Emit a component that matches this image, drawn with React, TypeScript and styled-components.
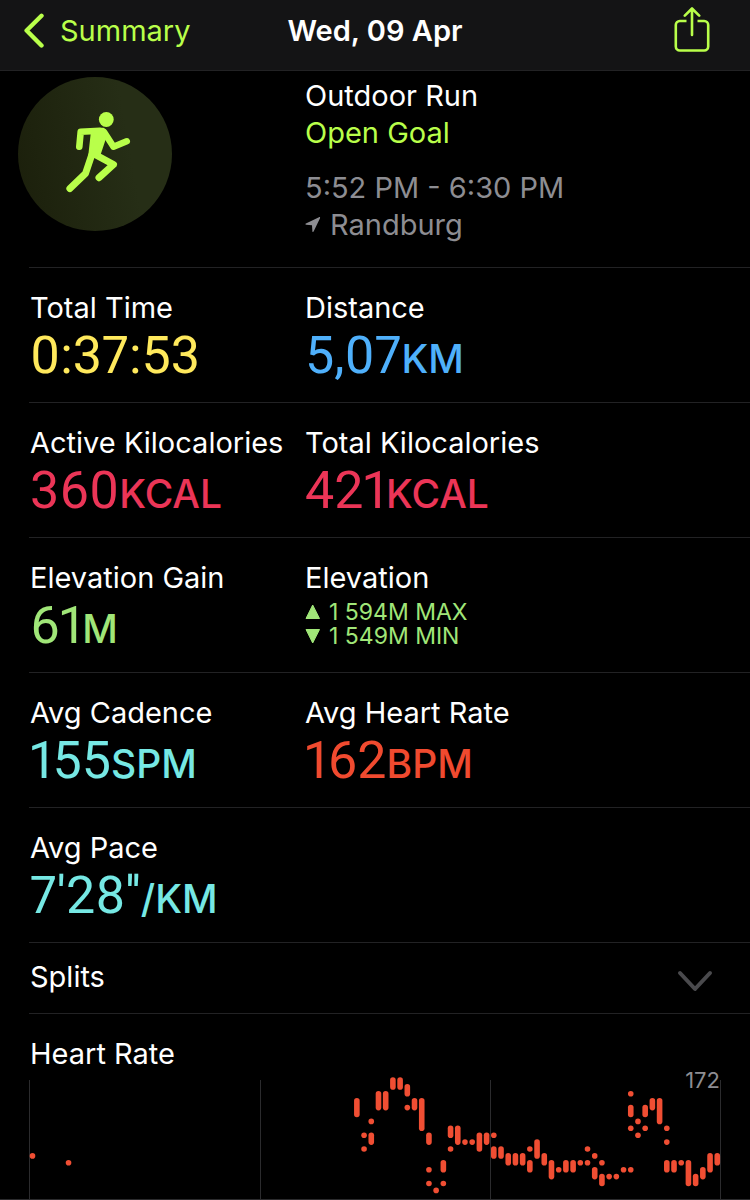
import React from "react";
import styled, { createGlobalStyle } from "styled-components";

const GlobalStyle = createGlobalStyle`
  *, *::before, *::after { box-sizing: border-box; }
  body {
    margin: 0;
    background: #000;
    color: #fff;
    font-family: Inter, Roboto, sans-serif;
    font-size: 29px;
    line-height: 36px;
  }
  h1, h2, p, dl, dt, dd { margin: 0; font: inherit; }
  button { font: inherit; color: inherit; background: none; border: 0; padding: 0; cursor: pointer; }
`;

const lime = "#b9ff4a";
const rule = "#222224";

const Page = styled.div`
  min-height: 100vh;
`;

const NavBar = styled.header`
  display: grid;
  grid-template-columns: 1fr auto 1fr;
  align-items: center;
  height: 71px;
  padding: 0 24px 8px;
  background: #141415;
  border-bottom: 1px solid ${rule};
`;

const BackLink = styled.a`
  display: flex;
  align-items: center;
  gap: 16px;
  color: ${lime};
  text-decoration: none;
`;

const Title = styled.h1`
  && { font-weight: 600; }
`;

const ShareButton = styled.button`
  && { color: ${lime}; }
  display: flex;
  justify-self: end;
  margin-right: 16px;
`;

const Summary = styled.div`
  display: grid;
  grid-template-columns: 275px 1fr;
  padding: 6px 0 24px 30px;
`;

const Badge = styled.div`
  display: flex;
  align-items: center;
  justify-content: center;
  width: 154px;
  height: 154px;
  margin-left: -12px;
  border-radius: 50%;
  background: linear-gradient(80deg, #1b1f0b, #262e16 70%);
`;

const Lines = styled.div`
  line-height: 37px;
`;

const Line = styled.p<{ $color?: string; $spaced?: boolean }>`
  && {
    display: flex;
    align-items: center;
    gap: 8px;
    color: ${(p) => p.$color ?? "#fff"};
    margin-top: ${(p) => (p.$spaced ? "18px" : "0")};
  }
`;

const Section = styled.section`
  margin-left: 29px;
  border-top: 1px solid ${rule};
`;

const StatRow = styled.dl`
  && {
    display: grid;
    grid-template-columns: 275px 1fr;
    margin-left: 29px;
    padding: 22px 0 20px 1px;
    border-top: 1px solid ${rule};
  }
`;

const Label = styled.dt`
  && {
    margin-bottom: 4px;
    white-space: nowrap;
  }
`;

const Value = styled.dd<{ $color: string }>`
  && {
    font-family: Roboto, Inter, sans-serif;
    font-size: 52px;
    line-height: 52px;
    font-variant-numeric: proportional-nums;
    color: ${(p) => p.$color};
    white-space: nowrap;
  }
`;

const Unit = styled.span`
  font-family: Inter, sans-serif;
  font-size: 39px;
  font-weight: 500;
  line-height: 1;
`;

const Range = styled.dd<{ $color: string }>`
  && {
    display: flex;
    align-items: center;
    gap: 8px;
    font-size: 23px;
    line-height: 24px;
    color: ${(p) => p.$color};
  }
`;

const SplitsToggle = styled.button`
  && {
    display: flex;
    align-items: center;
    justify-content: space-between;
    width: 100%;
    padding: 16px 37px 18px 1px;
    text-align: left;
  }
`;

const ChartTitle = styled.h2`
  && { padding: 22px 0 8px 1px; }
`;

const ChartArea = styled.div`
  position: relative;
  margin-right: 29px;
`;

const Peak = styled.span`
  position: absolute;
  top: -12px;
  right: 1px;
  font-size: 22px;
  line-height: 24px;
  color: #8d8d92;
`;

const ChartSvg = styled.svg`
  display: block;
  width: 100%;
  height: auto;
  overflow: visible;
`;

type Stat = { label: string; value: string; unit?: string; color: string; range?: [string, string] };

const rows: Stat[][] = [
  [
    { label: "Total Time", value: "0:37:53", color: "#ffe95c" },
    { label: "Distance", value: "5,07", unit: "KM", color: "#4fb0fb" },
  ],
  [
    { label: "Active Kilocalories", value: "360", unit: "KCAL", color: "#eb3557" },
    { label: "Total Kilocalories", value: "421", unit: "KCAL", color: "#eb3557" },
  ],
  [
    { label: "Elevation Gain", value: "61", unit: "M", color: "#a0e678" },
    { label: "Elevation", value: "", color: "#a0e678", range: ["1 594M MAX", "1 549M MIN"] },
  ],
  [
    { label: "Avg Cadence", value: "155", unit: "SPM", color: "#76e8e4" },
    { label: "Avg Heart Rate", value: "162", unit: "BPM", color: "#f04a2f" },
  ],
  [{ label: "Avg Pace", value: "7'28''", unit: "/KM", color: "#76e8e4" }],
];

// Heart-rate samples: [time slot, highest level, lowest level], level 0 at the top.
const samples: [number, number, number][] = [
  [0, 11, 11], [5, 12, 12], [45, 3, 5], [46, 8, 8], [46, 10, 10], [47, 6, 6], [47, 8, 9],
  [48, 2, 4], [49, 2, 4], [50, 0, 1], [51, 0, 1], [52, 1, 2], [52, 4, 4], [53, 3, 4],
  [54, 3, 7], [55, 8, 9], [55, 13, 13], [55, 15, 15], [56, 16, 16], [57, 12, 13], [57, 15, 15],
  [58, 7, 8], [58, 10, 10], [59, 7, 9], [60, 9, 9], [61, 9, 9], [62, 8, 10], [63, 8, 9],
  [64, 8, 8], [64, 10, 11], [65, 10, 11], [66, 11, 12], [67, 11, 12], [68, 11, 12],
  [69, 10, 10], [69, 12, 13], [70, 9, 11], [71, 11, 12], [72, 12, 14], [73, 13, 13],
  [74, 12, 13], [75, 12, 13], [76, 12, 12], [77, 10, 10], [77, 12, 12], [78, 11, 11],
  [78, 13, 14], [79, 12, 12], [79, 14, 15], [80, 14, 14], [81, 14, 14], [82, 13, 13],
  [83, 2, 2], [83, 4, 5], [83, 7, 7], [83, 13, 13], [84, 6, 6], [84, 8, 8], [85, 4, 5],
  [85, 7, 7], [86, 3, 4], [87, 3, 6], [88, 7, 7], [88, 9, 9], [88, 12, 13], [89, 12, 13],
  [90, 12, 12], [91, 12, 15], [92, 14, 15], [93, 13, 14], [94, 11, 13], [95, 11, 12],
];

const slotX = (slot: number) => 3.5 + slot * 7.208;
const levelY = (level: number) => level * 6.9;

function HeartRateChart() {
  return (
    <ChartSvg viewBox="0 0 692 120" role="img" aria-label="Heart rate over time">
      {[0, 231, 461, 691].map((x) => (
        <rect key={x} x={x} y={0} width={1} height={120} fill="#2b2b2d" />
      ))}
      <rect x={-29} y={119} width={750} height={1} fill="#2b2b2d" />
      {samples.map(([slot, high, low]) => (
        <rect
          key={`${slot}-${high}`}
          x={slotX(slot) - 2.8}
          y={levelY(high) - 2.8}
          width={5.6}
          height={levelY(low) - levelY(high) + 5.6}
          rx={2.8}
          fill="#f04e33"
        />
      ))}
    </ChartSvg>
  );
}

const BackIcon = () => (
  <svg width="20" height="36" viewBox="0 0 20 36" fill="none" stroke="currentColor" strokeWidth="4.4" strokeLinecap="round" strokeLinejoin="round" aria-hidden="true">
    <path d="M17.500 2.800 2.600 17.500 17.500 32.500" />
  </svg>
);

const ShareIcon = () => (
  <svg width="36" height="48" viewBox="0 0 36 48" fill="none" stroke="currentColor" strokeWidth="2.6" strokeLinecap="round" strokeLinejoin="round" aria-hidden="true">
    <path d="M12.500 14H5.800a4 4 0 0 0-4 4V39.500a4 4 0 0 0 4 4H30.200a4 4 0 0 0 4-4V18a4 4 0 0 0-4-4H23.500" strokeLinecap="butt" />
    <path d="M18 28V2M10.800 8.700 18 1.500 25.200 8.700" />
  </svg>
);

const RunnerIcon = () => (
  <svg width="72" height="86" viewBox="0 0 72 86" fill="none" stroke={lime} strokeWidth="6.6" strokeLinecap="round" strokeLinejoin="round" aria-hidden="true">
    <circle cx="47.300" cy="8.500" r="7.400" fill={lime} stroke="none" />
    <path d="M20.300 35.800 21.700 20.800 41 19.700" />
    <path d="M45 21 54.500 35.700 67.700 30.300" />
    <path d="M36 43.500 54.500 53.500 40 66.700" strokeWidth="7" />
    <path d="M32.700 44 26.500 62.500 10.900 77.500" strokeWidth="7" />
    <path d="M34 20 44 18.800 46.500 22.500 40 42 31 47Z" fill={lime} strokeWidth="4" />
  </svg>
);

const LocationIcon = () => (
  <svg width="17" height="17" viewBox="0 0 17 17" fill="currentColor" aria-hidden="true">
    <path d="M14 1.200.9 7.600c-.7.400-.6 1.100.2 1.200l5.900.4.400 6.200c.1.800.9.900 1.200.2L15 2.200c.3-.8-.2-1.300-1-1Z" />
  </svg>
);

const Triangle = ({ down }: { down?: boolean }) => (
  <svg width="16" height="16" viewBox="0 0 16 16" fill="currentColor" stroke="currentColor" strokeLinejoin="round" aria-hidden="true">
    <path d={down ? "M1 1.500H14.500L7.700 15Z" : "M1 14.500H14.500L7.700 1Z"} />
  </svg>
);

const ChevronDown = () => (
  <svg width="36" height="30" viewBox="0 0 36 30" fill="none" stroke="#4a4a4d" strokeWidth="4" strokeLinecap="round" strokeLinejoin="round" aria-hidden="true">
    <path d="M3 11 18 27 33 11" />
  </svg>
);

export default function App() {
  return (
    <Page>
      <GlobalStyle />
      <NavBar>
        <BackLink href="#summary">
          <BackIcon />
          Summary
        </BackLink>
        <Title>Wed, 09 Apr</Title>
        <ShareButton type="button" aria-label="Share">
          <ShareIcon />
        </ShareButton>
      </NavBar>
      <main>
        <Summary>
          <Badge>
            <RunnerIcon />
          </Badge>
          <Lines>
            <Line>Outdoor Run</Line>
            <Line $color={lime}>Open Goal</Line>
            <Line $color="#8d8d92" $spaced>5:52 PM - 6:30 PM</Line>
            <Line $color="#8d8d92">
              <LocationIcon />
              Randburg
            </Line>
          </Lines>
        </Summary>
        {rows.map((row) => (
          <StatRow key={row[0].label}>
            {row.map((stat) => (
              <div key={stat.label}>
                <Label>{stat.label}</Label>
                {stat.range ? (
                  stat.range.map((text, i) => (
                    <Range key={text} $color={stat.color}>
                      <Triangle down={i === 1} />
                      {text}
                    </Range>
                  ))
                ) : (
                  <Value $color={stat.color}>
                    {stat.value}
                    {stat.unit && <Unit>{stat.unit}</Unit>}
                  </Value>
                )}
              </div>
            ))}
          </StatRow>
        ))}
        <Section>
          <SplitsToggle type="button" aria-expanded="false">
            Splits
            <ChevronDown />
          </SplitsToggle>
        </Section>
        <Section>
          <ChartTitle>Heart Rate</ChartTitle>
          <ChartArea>
            <HeartRateChart />
            <Peak>172</Peak>
          </ChartArea>
        </Section>
      </main>
    </Page>
  );
}
